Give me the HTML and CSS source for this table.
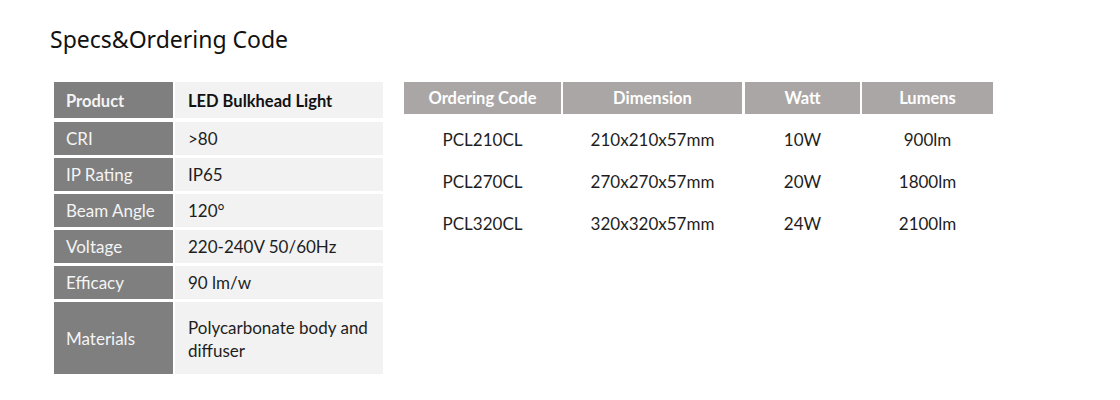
FILE: index.html
```html
<!DOCTYPE html>
<html lang="en">
<head>
<meta charset="utf-8">
<title>Specs&amp;Ordering Code</title>
<link rel="stylesheet" href="styles.css">
</head>
<body>
<main class="page">
  <h1 class="title">Specs&amp;Ordering Code</h1>
  <div class="tables">
    <div class="specs">
      <div class="lbl head">Product</div><div class="val head">LED Bulkhead Light</div>
      <div class="lbl">CRI</div><div class="val">&gt;80</div>
      <div class="lbl">IP Rating</div><div class="val">IP65</div>
      <div class="lbl">Beam Angle</div><div class="val">120°</div>
      <div class="lbl">Voltage</div><div class="val">220-240V 50/60Hz</div>
      <div class="lbl">Efficacy</div><div class="val">90 lm/w</div>
      <div class="lbl tall">Materials</div><div class="val tall">Polycarbonate body and diffuser</div>
    </div>
    <div class="order">
      <div class="th">Ordering Code</div><div class="th">Dimension</div><div class="th">Watt</div><div class="th">Lumens</div>
      <div class="td">PCL210CL</div><div class="td">210x210x57mm</div><div class="td">10W</div><div class="td">900lm</div>
      <div class="td">PCL270CL</div><div class="td">270x270x57mm</div><div class="td">20W</div><div class="td">1800lm</div>
      <div class="td">PCL320CL</div><div class="td">320x320x57mm</div><div class="td">24W</div><div class="td">2100lm</div>
    </div>
  </div>
</main>
</body>
</html>
```
FILE: styles.css
```css
html, body {
  margin: 0;
  padding: 0;
  background: #ffffff;
}
.page {
  padding: 24px 0 0 50px;
}
.title {
  margin: 0;
  font-family: "Noto Sans", "DejaVu Sans", sans-serif;
  font-weight: 400;
  font-size: 23px;
  line-height: 30px;
  color: #111111;
}
.tables {
  display: flex;
  align-items: flex-start;
  margin-top: 28px;
  padding-left: 4px;
  gap: 21px;
  font-family: "Lato", "Liberation Sans", sans-serif;
  font-size: 17px;
}
.specs {
  display: grid;
  grid-template-columns: 119px 208px;
  grid-template-rows: 37px 33px 33px 33px 33px 33px 72px;
  column-gap: 2px;
  row-gap: 3px;
}
.lbl, .val {
  display: flex;
  align-items: center;
  line-height: 22px;
  padding-top: 1px;
}
.lbl {
  background: #7f7f7f;
  color: #f4f4f4;
  padding-left: 12px;
}
.val {
  background: #f2f2f2;
  color: #1e1e1e;
  padding-right: 8px;
  padding-left: 13px;
}
.val.tall {
  line-height: 23px;
}
.head {
  font-weight: 700;
  font-size: 16.5px;
  margin-bottom: 1px;
}
.val.head {
  color: #111111;
}
.order {
  display: grid;
  grid-template-columns: 157px 180px 115px 131px;
  grid-template-rows: 36px 42px 42px 42px;
  column-gap: 2px;
}
.th {
  display: flex;
  align-items: center;
  justify-content: center;
  background: #aaa6a5;
  color: #ffffff;
  font-weight: 700;
  font-size: 16.5px;
  margin-bottom: 4px;
}
.td {
  display: flex;
  align-items: center;
  justify-content: center;
  color: #1e1e1e;
}
.th:nth-child(2) { margin-right: 1px; }
.td:nth-child(4n+2) { margin-right: 1px; }
```
